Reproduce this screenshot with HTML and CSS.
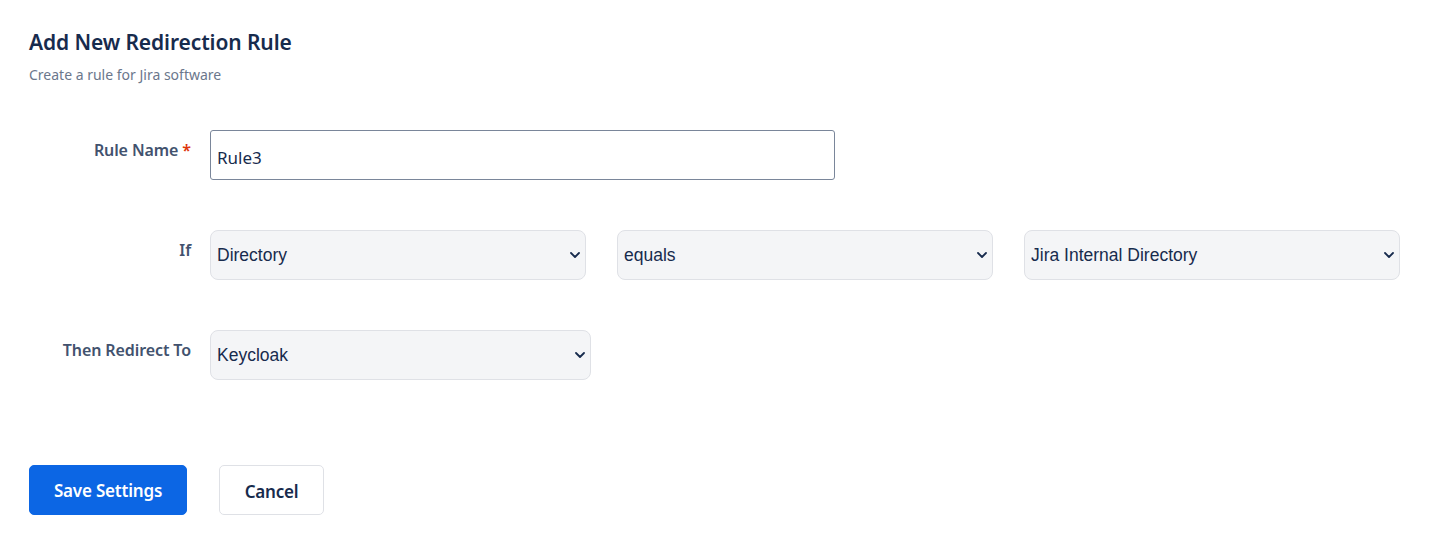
FILE: index.html
```html
<!DOCTYPE html>
<html lang="en">
<head>
<meta charset="utf-8">
<title>Add New Redirection Rule</title>
<link rel="stylesheet" href="styles.css">
</head>
<body>
<div class="page">
  <h1 class="title">Add New Redirection Rule</h1>
  <p class="subtitle">Create a rule for Jira software</p>

  <div class="form">
    <div class="row row-name">
      <label class="label" for="rname">Rule Name <span class="req">*</span></label>
      <input id="rname" class="text-input" type="text" value="Rule3">
    </div>

    <div class="row row-if">
      <label class="label">If</label>
      <div class="selects">
        <div class="select-wrap">
          <select class="select"><option>Directory</option></select>
          <svg class="chev" viewBox="0 0 10 6" width="10" height="6"><path d="M1 1l4 4 4-4" fill="none" stroke="#172b4d" stroke-width="1.8" stroke-linecap="round" stroke-linejoin="round"/></svg>
        </div>
        <div class="select-wrap">
          <select class="select"><option>equals</option></select>
          <svg class="chev" viewBox="0 0 10 6" width="10" height="6"><path d="M1 1l4 4 4-4" fill="none" stroke="#172b4d" stroke-width="1.8" stroke-linecap="round" stroke-linejoin="round"/></svg>
        </div>
        <div class="select-wrap">
          <select class="select"><option>Jira Internal Directory</option></select>
          <svg class="chev" viewBox="0 0 10 6" width="10" height="6"><path d="M1 1l4 4 4-4" fill="none" stroke="#172b4d" stroke-width="1.8" stroke-linecap="round" stroke-linejoin="round"/></svg>
        </div>
      </div>
    </div>

    <div class="row row-then">
      <label class="label">Then Redirect To</label>
      <div class="select-wrap wide">
        <select class="select"><option>Keycloak</option></select>
        <svg class="chev" viewBox="0 0 10 6" width="10" height="6"><path d="M1 1l4 4 4-4" fill="none" stroke="#172b4d" stroke-width="1.8" stroke-linecap="round" stroke-linejoin="round"/></svg>
      </div>
    </div>
  </div>

  <div class="actions">
    <button class="btn btn-primary" type="button">Save Settings</button>
    <button class="btn btn-secondary" type="button">Cancel</button>
  </div>
</div>
</body>
</html>
```
FILE: styles.css
```css
* { box-sizing: border-box; }
html, body { margin: 0; padding: 0; background: #ffffff; }
body {
  font-family: "Noto Sans", "Open Sans", "DejaVu Sans", sans-serif;
  color: #172b4d;
}
.page {
  padding: 28px 29px 0 29px;
}
.title {
  margin: 0;
  font-size: 21px;
  font-weight: 600;
  line-height: 28px;
  color: #172b4d;
  letter-spacing: -0.1px;
}
.subtitle {
  margin: 10px 0 0 0;
  font-size: 14px;
  line-height: 18px;
  color: #6b778c;
}
.form {
  margin-top: 46px;
  display: flex;
  flex-direction: column;
  gap: 50px;
}
.row {
  display: flex;
  align-items: flex-start;
  gap: 19px;
}
.label {
  width: 162px;
  flex: none;
  text-align: right;
  font-size: 16px;
  font-weight: 600;
  color: #42526e;
  line-height: 20px;
  padding-top: 10px;
  letter-spacing: -0.1px;
}
.req { color: #de350b; }
.text-input {
  width: 625px;
  height: 50px;
  border: 1px solid #7a869a;
  border-radius: 3px;
  padding: 4px 6px 0 6px;
  font-family: "Noto Sans", "Open Sans", sans-serif;
  font-size: 17px;
  color: #172b4d;
  background: #ffffff;
  outline: none;
}
.selects {
  display: flex;
  gap: 31px;
}
.select-wrap {
  position: relative;
  width: 376px;
  height: 50px;
}
.select-wrap.wide { width: 381px; }
.select {
  appearance: none;
  -webkit-appearance: none;
  width: 100%;
  height: 100%;
  border: 1px solid #dfe1e6;
  border-radius: 8px;
  background: #f4f5f7;
  padding: 0 30px 0 6px;
  font-family: "Liberation Sans", Arial, sans-serif;
  font-size: 17.5px;
  color: #172b4d;
  outline: none;
}
.chev {
  position: absolute;
  right: 6px;
  top: 22px;
  pointer-events: none;
}
.actions {
  margin-top: 85px;
  display: flex;
  gap: 32px;
}
.btn {
  height: 50px;
  border-radius: 5px;
  font-family: "Noto Sans", "Open Sans", sans-serif;
  font-size: 17px;
  font-weight: 600;
  cursor: pointer;
  letter-spacing: -0.2px;
}
.btn-primary {
  width: 158px;
  background: #0c66e4;
  border: 1px solid #0c66e4;
  color: #ffffff;
  padding-top: 2px;
}
.btn-secondary {
  width: 105px;
  background: #ffffff;
  border: 1px solid #dfe1e6;
  color: #172b4d;
  padding-top: 4px;
}
```
